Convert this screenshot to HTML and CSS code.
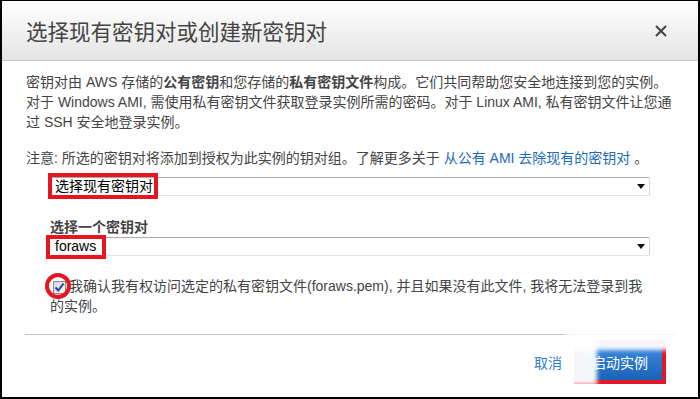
FILE: index.html
```html
<!DOCTYPE html>
<html lang="zh-CN">
<head>
    <meta charset="UTF-8">
    <meta name="viewport" content="width=device-width, initial-scale=1.0">
    <title>选择现有密钥对或创建新密钥对</title>
    <link rel="stylesheet" href="styles.css">
</head>
<body>
  <div class="dialog">
    <div class="dialog-header">
      <h2 class="dialog-title">选择现有密钥对或创建新密钥对</h2>
      <button class="close-btn" title="关闭">
        <svg width="12" height="12" viewBox="0 0 12 12"><path d="M1 1L11 11M11 1L1 11" stroke="#444" stroke-width="2"/></svg>
      </button>
    </div>

    <div class="dialog-body">
      <p class="intro">密钥对由 AWS 存储的<b>公有密钥</b>和您存储的<b>私有密钥文件</b>构成。它们共同帮助您安全地连接到您的实例。对于 Windows AMI, 需使用私有密钥文件获取登录实例所需的密码。对于 Linux AMI, 私有密钥文件让您通过 SSH 安全地登录实例。</p>
      <p class="note">注意: 所选的密钥对将添加到授权为此实例的钥对组。了解更多关于 <a href="#">从公有 AMI 去除现有的密钥对</a> 。</p>

      <div class="key-form">
        <div class="select">
          <span class="select-value">选择现有密钥对</span>
          <span class="select-arrow"></span>
          <span class="mark mark-mode"></span>
        </div>

        <label class="field-label">选择一个密钥对</label>
        <div class="select">
          <span class="select-value">foraws</span>
          <span class="select-arrow"></span>
          <span class="mark mark-key"></span>
        </div>

        <label class="ack">
          <span class="checkbox">
            <svg width="11" height="11" viewBox="0 0 11 11"><path d="M1.5 5.5L4.2 8.5L9.5 1.5" fill="none" stroke="#2a3f9c" stroke-width="2"/></svg>
          </span>我确认我有权访问选定的私有密钥文件(foraws.pem), 并且如果没有此文件, 我将无法登录到我的实例。
          <span class="mark-circle"></span>
        </label>
      </div>
    </div>

    <div class="dialog-footer">
      <a href="#" class="cancel">取消</a>
      <button class="launch">启动实例</button>
      <span class="smudge smudge-top"></span>
      <span class="smudge smudge-left"></span>
    </div>
  </div>
</body>
</html>
```

FILE: styles.css
```css
body {
    margin: 0;
    font-family: "Liberation Sans", "Noto Sans CJK SC", sans-serif;
    font-size: 14px;
    color: #444;
    background: #fff;
}
.dialog {
    height: 399px;
    box-sizing: border-box;
    border: 2px solid #000;
    border-top-width: 1px;
    display: flex;
    flex-direction: column;
    background: #fff;
}
.dialog-header {
    height: 60px;
    box-sizing: border-box;
    padding: 0 31px 0 24px;
    display: flex;
    align-items: center;
    justify-content: space-between;
    background: linear-gradient(#ffffff, #e4e4e4);
    border-bottom: 1px solid #c8c8c8;
}
.dialog-title {
    margin: 0;
    font-size: 21.5px;
    font-weight: normal;
    color: #444;
    font-family: "Noto Sans CJK SC", sans-serif;
}
.close-btn {
    border: none;
    background: none;
    padding: 0;
    width: 12px;
    height: 12px;
    display: flex;
    cursor: pointer;
}
.dialog-body {
    padding: 11px 24px 0;
}
.intro, .note {
    margin: 0;
    line-height: 20px;
}
.note {
    margin-top: 16px;
}
.note a {
    color: #1b6bbd;
    text-decoration: none;
}
.key-form {
    margin: 9px 0 0 22px;
    width: 602px;
}
.select {
    position: relative;
    height: 19px;
    box-sizing: border-box;
    border: 1px solid #d4d4d4;
    border-top-color: #a9a9a9;
    border-bottom-color: #e2e2e2;
    border-radius: 2px;
    display: flex;
    align-items: center;
    justify-content: space-between;
    padding: 0 4px 0 6px;
    color: #000;
    line-height: 17px;
}
.select-arrow {
    width: 0;
    height: 0;
    border-left: 4px solid transparent;
    border-right: 4px solid transparent;
    border-top: 5px solid #111;
}
.mark {
    position: absolute;
    box-sizing: border-box;
    border: 4px solid #e8141f;
    left: -1px;
}
.mark-mode {
    top: -5px;
    width: 110px;
    height: 26px;
}
.mark-key {
    top: -3px;
    left: -3px;
    width: 60px;
    height: 24px;
}
.field-label {
    display: block;
    margin-top: 21px;
    padding-left: 2px;
    line-height: 20px;
    font-weight: bold;
}
.ack {
    position: relative;
    display: block;
    margin-top: 20px;
    padding-left: 2px;
    line-height: 20px;
}
.checkbox {
    display: inline-flex;
    align-items: center;
    justify-content: center;
    width: 13px;
    height: 13px;
    box-sizing: border-box;
    margin: 0 3px 0 3px;
    vertical-align: -2px;
    border: 1px solid #8c8c8c;
    background: linear-gradient(135deg, #d6d6d6, #f6f6f6);
}
.mark-circle {
    position: absolute;
    left: -3px;
    top: -3px;
    width: 26px;
    height: 26px;
    box-sizing: border-box;
    border: 4px solid #e8141f;
    border-radius: 50%;
}
.dialog-footer {
    position: relative;
    margin: 18px 23px 0;
    padding: 9px 13px 0 0;
    border-top: 1px solid #c4c4c4;
    display: flex;
    justify-content: flex-end;
    align-items: center;
    gap: 16px;
}
.cancel {
    color: #2f7fd0;
    text-decoration: none;
    font-family: "Noto Sans CJK SC", sans-serif;
}
.launch {
    height: 36px;
    padding: 0 14px;
    border: none;
    background: linear-gradient(#3b8ddf, #1a63b6);
    color: #fff;
    font-family: "Noto Sans CJK SC", sans-serif;
    font-size: 14px;
    outline: 4px solid #e3162a;
    cursor: pointer;
}
.smudge {
    position: absolute;
    background: rgba(255, 255, 255, 0.95);
    filter: blur(2px);
}
.smudge-top {
    left: 540px;
    top: -3px;
    width: 112px;
    height: 18px;
}
.smudge-left {
    left: 540px;
    top: 4px;
    width: 32px;
    height: 46px;
}
```
